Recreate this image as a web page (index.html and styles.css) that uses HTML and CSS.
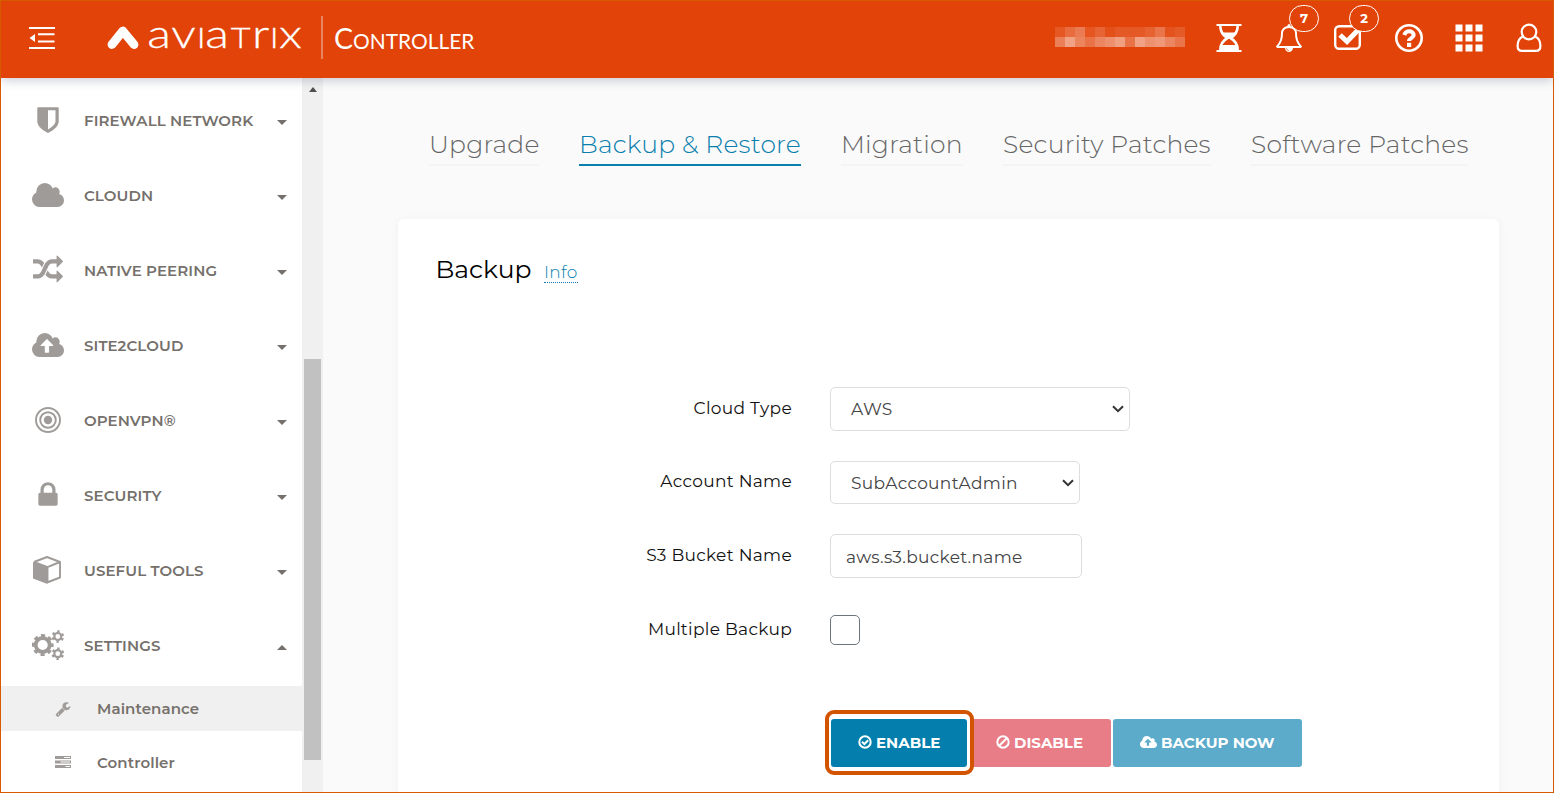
FILE: index.html
```html
<!DOCTYPE html>
<html lang="en">
<head>
<meta charset="utf-8">
<title>Aviatrix Controller</title>
<link rel="stylesheet" href="styles.css">
</head>
<body>
<div class="app">
  <header class="header">
    <svg class="menu-icon" width="26" height="24" viewBox="0 0 26 24" fill="#fff"><path d="M0 1h26v2H0zM0 21h26v2H0zM9 7.300h16.500v2H9zM9 14.500h16.500v2H9zM6 8v8L0.500 12z"/></svg>
    <svg class="logo" width="196" height="30" viewBox="0 0 196 30">
      <path d="M5 21.500L15.800 8L27 21.500" fill="none" stroke="#fff" stroke-width="8.800" stroke-linecap="round" stroke-linejoin="round"/>
      <path d="M11.500 26.500L15.800 16L20.500 26.500z" fill="#e24308"/>
      <g class="logo-text" transform="scale(1.22 1)">
        <text y="25"><tspan x="33">a</tspan><tspan x="52.700">v</tspan><tspan class="cap" x="73.600">i</tspan><tspan x="80.500">a</tspan><tspan class="cap" x="101.500">t</tspan><tspan x="118.800">r</tspan><tspan class="cap" x="133.500">i</tspan><tspan x="141">x</tspan></text>
      </g>
    </svg>
    <span class="divider"></span>
    <span class="product">C<span class="product-small">ONTROLLER</span></span>
    <svg class="redacted" width="130" height="20" viewBox="0 0 13 2" shape-rendering="crispEdges" fill="#fff">
      <g><rect width="1" height="1" opacity=".11"/><rect x="1" width="1" height="1" opacity=".22"/><rect x="2" width="1" height="1" opacity=".3"/><rect x="3" width="1" height="1" opacity=".1"/><rect x="4" width="1" height="1" opacity=".18"/><rect x="5" width="1" height="1" opacity=".07"/><rect x="6" width="3" height="1" opacity=".12"/><rect x="9" width="1" height="1" opacity=".17"/><rect x="10" width="1" height="1" opacity=".27"/><rect x="11" width="1" height="1" opacity=".09"/><rect x="12" width="1" height="1" opacity=".13"/></g>
      <g><rect y="1" width="1" height="1" opacity=".32"/><rect x="1" y="1" width="1" height="1" opacity=".5"/><rect x="2" y="1" width="1" height="1" opacity=".35"/><rect x="3" y="1" width="1" height="1" opacity=".26"/><rect x="4" y="1" width="1" height="1" opacity=".36"/><rect x="5" y="1" width="1" height="1" opacity=".41"/><rect x="6" y="1" width="1" height="1" opacity=".49"/><rect x="7" y="1" width="1" height="1" opacity=".25"/><rect x="8" y="1" width="1" height="1" opacity=".5"/><rect x="9" y="1" width="1" height="1" opacity=".42"/><rect x="10" y="1" width="1" height="1" opacity=".45"/><rect x="11" y="1" width="1" height="1" opacity=".36"/><rect x="12" y="1" width="1" height="1" opacity=".27"/></g>
    </svg>
    <div class="actions">
      <span class="action"><svg width="26" height="28" viewBox="0 0 26 28" fill="none" stroke="#fff" stroke-width="2"><path d="M0.500 1h25M0.500 27h25"/><path stroke-width="2.600" d="M4.300 2C4.300 9 8 12 11.500 14C8 16 4.300 19 4.300 26M21.700 2C21.700 9 18 12 14.500 14C18 16 21.700 19 21.700 26"/><path d="M6 8.500h14C19 11 17 13 14.500 14h-3C9 13 7 11 6 8.500z" fill="#fff" stroke="none"/><path d="M4.500 26c.3-3 1-4 2-5h13c1 1 1.700 2 2 5z" fill="#fff" stroke="none"/></svg></span>
      <span class="action"><svg width="28" height="28" viewBox="0 0 1792 1792" fill="#fff"><path d="M912 1696q0-16-16-16-59 0-101.500-42.500t-42.500-101.500q0-16-16-16t-16 16q0 73 51.500 124.500t124.500 51.500q16 0 16-16zm-666-288h1300q-266-300-266-832 0-51-24-105t-69-103-121.500-80.500-169.500-31.500-169.500 31.500-121.500 80.500-69 103-24 105q0 532-266 832zm1482 0q0 52-38 90t-90 38h-448q0 106-75 181t-181 75-181-75-75-181h-448q-52 0-90-38t-38-90q50-42 91-88t85-119.500 74.500-158.500 50-206 19.500-260q0-152 117-282.500t307-158.500q-8-19-8-39 0-40 28-68t68-28 68 28 28 68q0 20-8 39 190 28 307 158.500t117 282.500q0 139 19.500 260t50 206 74.500 158.500 85 119.500 91 88z"/></svg><span class="badge">7</span></span>
      <span class="action"><svg class="check" width="30" height="28" viewBox="0 0 30 28" fill="none" stroke="#fff"><rect x="2.200" y="3.200" width="24.600" height="22.600" rx="4" stroke-width="2.400"/><path d="M7 12L14 18.500L27 5" stroke-width="5"/></svg><span class="badge">2</span></span>
      <span class="action"><svg width="28" height="28" viewBox="0 0 28 28" fill="none" stroke="#fff"><circle cx="14" cy="14" r="12.700" stroke-width="2.600"/><path d="M9.200 11C10.500 8 12 7.300 14 7.300c2.500 0 4.700 1.500 4.700 3.800 0 3-4.700 3-4.700 6" stroke-width="4"/><path d="M12 18.800h4.200V23H12z" fill="#fff" stroke="none"/></svg></span>
      <span class="action"><svg width="28" height="28" viewBox="0 0 28 28" fill="#fff"><path d="M.500.500h7v7h-7zM10.500.500h7v7h-7zM20.500.500h7v7h-7zM.500 10.500h7v7h-7zM10.500 10.500h7v7h-7zM20.500 10.500h7v7h-7zM.500 20.500h7v7h-7zM10.500 20.500h7v7h-7zM20.500 20.500h7v7h-7z"/></svg></span>
      <span class="action"><svg width="26" height="30" viewBox="0 0 26 30" fill="none" stroke="#fff" stroke-width="2.200"><circle cx="13" cy="9" r="7.300"/><path d="M7 13.500C3 15 1.600 19 1.600 23c0 3.500 2 4.900 4.400 4.900h14c2.400 0 4.400-1.400 4.400-4.900 0-4-1.400-8-5.400-9.500"/></svg></span>
    </div>
  </header>

  <div class="body">
    <nav class="sidebar">
      <a class="item"><span class="ico"><svg width="30" height="30" viewBox="0 0 1792 1792"><path d="M1344 960V320H896v1137q119-63 213-137 235-184 235-360zm192-768v768q0 86-33.500 170.500t-83 150-118 127.500-126.500 103-121 77.500-89.500 49.500-42.500 20q-12 6-26 6t-26-6q-16-7-42.500-20t-89.500-49.500-121-77.500-126.500-103-118-127.500-83-150T256 960V192q0-26 19-45t45-19h1152q26 0 45 19t19 45z"/></svg></span><span class="name">FIREWALL NETWORK</span><i class="caret"></i></a>
      <a class="item"><span class="ico"><svg width="32" height="24" viewBox="64 128 1920 1408" preserveAspectRatio="none"><path d="M1984 1152q0 159-112.500 271.500t-271.500 112.500h-1088q-185 0-316.500-131.500t-131.500-316.500q0-132 71-241.500t187-163.500q-2-28-2-43 0-212 150-362t362-150q158 0 286.500 88t187.500 230q70-62 166-62 106 0 181 75t75 181q0 75-41 138 129 30 213 134.500t84 239.500z"/></svg></span><span class="name">CLOUDN</span><i class="caret"></i></a>
      <a class="item"><span class="ico"><svg width="30" height="30" viewBox="0 0 1792 1792"><path d="M666 481q-60 92-137 273-22-45-37-72.500t-40.500-63.500-51-56.500-63-35-81.500-14.500h-224q-14 0-23-9t-9-23v-192q0-14 9-23t23-9h224q250 0 410 225zm1126 799q0 14-9 23l-320 320q-9 9-23 9-13 0-22.500-9.500t-9.500-22.500v-192q-32 0-85 .5t-81 1-73-1-71-5-64-10.500-63-18.500-58-28.500-59-40-55-53.500-56-69.500q59-93 136-273 22 45 37 72.500t40.500 63.500 51 56.500 63 35 81.500 14.500h256v-192q0-14 9-23t23-9q12 0 24 10l319 319q9 9 9 23zm0-896q0 14-9 23l-320 320q-9 9-23 9-13 0-22.500-9.500t-9.500-22.500v-192h-256q-48 0-87 15t-69 45-51 61.500-45 77.500q-32 62-78 171-29 66-49.500 111t-54 105-64 100-74 83-90 68.500-106.500 42-128 16.500h-224q-14 0-23-9t-9-23v-192q0-14 9-23t23-9h224q48 0 87-15t69-45 51-61.500 45-77.500q32-62 78-171 29-66 49.500-111t54-105 64-100 74-83 90-68.500 106.500-42 128-16.500h256v-192q0-14 9-23t23-9q12 0 24 10l319 319q9 9 9 23z"/></svg></span><span class="name">NATIVE PEERING</span><i class="caret"></i></a>
      <a class="item"><span class="ico"><svg width="32" height="24" viewBox="64 128 1920 1408" preserveAspectRatio="none"><path d="M1344 864q0-14-9-23l-352-352q-9-9-23-9t-23 9l-351 351q-10 12-10 24 0 14 9 23t23 9h224v352q0 13 9.500 22.500t22.500 9.500h192q13 0 22.500-9.500t9.500-22.500v-352h224q13 0 22.500-9.500t9.500-22.500zm640 288q0 159-112.500 271.500t-271.500 112.500h-1088q-185 0-316.500-131.500t-131.500-316.500q0-132 71-241.500t187-163.500q-2-28-2-43 0-212 150-362t362-150q158 0 286.500 88t187.500 230q70-62 166-62 106 0 181 75t75 181q0 75-41 138 129 30 213 134.500t84 239.500z"/></svg></span><span class="name">SITE2CLOUD</span><i class="caret"></i></a>
      <a class="item"><span class="ico"><svg width="26" height="26" viewBox="0 0 26 26"><circle cx="13" cy="13" r="4.200"/><g fill="none" stroke="#9f9b98" stroke-width="1.900"><circle cx="13" cy="13" r="7.800"/><circle cx="13" cy="13" r="12"/></g></svg></span><span class="name">OPENVPN®</span><i class="caret"></i></a>
      <a class="item"><span class="ico"><svg width="30" height="30" viewBox="0 0 1792 1792"><path d="M640 768h512v-192q0-106-75-181t-181-75-181 75-75 181v192zm832 96v576q0 40-28 68t-68 28h-960q-40 0-68-28t-28-68v-576q0-40 28-68t68-28h32v-192q0-184 132-316t316-132 316 132 132 316v192h32q40 0 68 28t28 68z"/></svg></span><span class="name">SECURITY</span><i class="caret"></i></a>
      <a class="item"><span class="ico"><svg width="30" height="28" viewBox="0 0 30 28"><path d="M0 6L14.500 11.500V28L0 22.500z"/><path d="M1 6L14 1L27 6V21.500L14 26.500M14.500 11.200L27 6M1 6L14.500 11.200V26.500" fill="none" stroke="#9f9b98" stroke-width="1.900" stroke-linejoin="round"/></svg></span><span class="name">USEFUL TOOLS</span><i class="caret"></i></a>
      <a class="item"><span class="ico"><svg width="32" height="30" viewBox="0 0 32 30" fill="none" stroke="#9f9b98"><g stroke-width="3.800"><circle cx="10.700" cy="15" r="7"/><circle cx="10.700" cy="15" r="9" stroke-width="3.800" stroke-dasharray="3.900 3.169" stroke-dashoffset="1.950"/></g><g stroke-width="2.200"><circle cx="25.800" cy="6.500" r="3.500"/><circle cx="25.800" cy="6.500" r="5.200" stroke-dasharray="2.400 3.045" stroke-dashoffset="-1.500"/><circle cx="25.800" cy="23.700" r="3.500"/><circle cx="25.800" cy="23.700" r="5.200" stroke-dasharray="2.400 3.045" stroke-dashoffset="-1.500"/></g></svg></span><span class="name">SETTINGS</span><i class="caret up"></i></a>
      <div class="submenu">
        <a class="sub active"><span class="sub-ico"><svg width="16" height="16" viewBox="0 0 1792 1792"><path d="M448 1472q0-26-19-45t-45-19-45 19-19 45 19 45 45 19 45-19 19-45zm644-420l-682 682q-37 37-90 37-52 0-91-37l-106-108q-38-36-38-90 0-53 38-91l681-681q39 98 114.500 173.500t173.500 114.500zm634-435q0 39-23 106-47 134-164.500 217.500t-258.500 83.500q-185 0-316.500-131.500t-131.500-316.500 131.500-316.500 316.500-131.500q58 0 121.500 16.500t107.500 46.500q16 11 16 28t-16 28l-293 169v224l193 107q5-3 79-48.500t135.500-81 70.500-35.500q15 0 23.500 10t8.500 25z"/></svg></span><span>Maintenance</span></a>
        <a class="sub"><span class="sub-ico"><svg width="16" height="14" viewBox="0 0 16 14"><path d="M0 0h16v3H0zM0 4.500h16v3H0zM0 9h16v3H0z"/><path d="M9 1h6v1H9zM5.500 5.500H15v1H5.500zM10.500 10H15v1h-4.500z" fill="#fff"/></svg></span><span>Controller</span></a>
      </div>
    </nav>
    <div class="scrollbar"><i class="scroll-up"></i><i class="thumb"></i></div>

    <main class="content">
      <div class="tabs">
        <a class="tab t1">Upgrade</a>
        <a class="tab t2 selected">Backup &amp; Restore</a>
        <a class="tab t3">Migration</a>
        <a class="tab t4">Security Patches</a>
        <a class="tab t5">Software Patches</a>
      </div>
      <section class="card">
        <div class="card-head"><h1>Backup</h1><a class="info">Info</a></div>
        <div class="form">
          <label>Cloud Type</label>
          <div class="field select wide"><span>AWS</span><svg width="12" height="8" viewBox="0 0 12 8"><path d="M1 1.200L6 6.200L11 1.200"/></svg></div>
          <label>Account Name</label>
          <div class="field select short"><span>SubAccountAdmin</span><svg width="12" height="8" viewBox="0 0 12 8"><path d="M1 1.200L6 6.200L11 1.200"/></svg></div>
          <label>S3 Bucket Name</label>
          <div class="field text"><span>aws.s3.bucket.name</span></div>
          <label>Multiple Backup</label>
          <span class="checkbox"></span>
        </div>
        <div class="buttons">
          <a class="btn enable"><svg width="14" height="14" viewBox="0 0 14 14" fill="none" stroke="#fff" stroke-width="2"><circle cx="7" cy="7" r="5.700"/><path d="M4 6.800L6.400 9L10.200 5.200"/></svg><span>ENABLE</span></a>
          <a class="btn disable"><svg width="14" height="14" viewBox="0 0 14 14" fill="none" stroke="#fff" stroke-width="2"><circle cx="7" cy="7" r="5.700"/><path d="M3.200 10.800L10.800 3.200"/></svg><span>DISABLE</span></a>
          <a class="btn backup"><svg width="17" height="12" viewBox="64 128 1920 1408" preserveAspectRatio="none" fill="#fff"><path d="M1344 864q0-14-9-23l-352-352q-9-9-23-9t-23 9l-351 351q-10 12-10 24 0 14 9 23t23 9h224v352q0 13 9.500 22.500t22.500 9.500h192q13 0 22.500-9.500t9.500-22.500v-352h224q13 0 22.500-9.500t9.500-22.500zm640 288q0 159-112.500 271.500t-271.500 112.500h-1088q-185 0-316.500-131.500t-131.500-316.500q0-132 71-241.500t187-163.500q-2-28-2-43 0-212 150-362t362-150q158 0 286.500 88t187.500 230q70-62 166-62 106 0 181 75t75 181q0 75-41 138 129 30 213 134.500t84 239.500z"/></svg><span>BACKUP NOW</span></a>
        </div>
      </section>
    </main>
  </div>
</div>
</body>
</html>
```
FILE: styles.css
```css
* { box-sizing: border-box; }
body { margin: 0; font-family: Montserrat, Inter, "Open Sans", sans-serif; overflow: hidden; }
svg { display: block; flex: none; }
span, a, label, h1 { white-space: nowrap; }
.app { width: 1554px; height: 793px; border: 1px solid #d65a00; display: flex; flex-direction: column; overflow: hidden; background: #fafafa; }

.header { height: 77px; flex: none; background: #e24308; display: flex; align-items: center; position: relative; z-index: 2; box-shadow: 0 2px 10px rgba(60, 70, 100, .28); }
.header > * { flex: none; }
.menu-icon { margin: -3px 0 0 28px; }
.logo { margin: -4px 0 0 52px; overflow: visible; }
.logo-text { font-family: Lato, sans-serif; font-weight: 300; font-size: 40px; fill: #fff; stroke: #fff; stroke-width: .3px; }
.logo-text .cap { text-transform: uppercase; font-size: 28px; }
.divider { width: 2px; height: 43px; background: #eb8560; margin: -4px 0 0 18px; }
.product { width: 140px; margin: 0 0 0 11px; font-family: Lato, sans-serif; font-size: 28.5px; line-height: 40px; color: #fff; }
.product-small { font-size: 20.9px; }
.redacted { margin: -5px 0 0 581px; }
.actions { display: flex; margin: -4px 0 0 14px; }
.action { width: 60px; height: 30px; display: flex; align-items: center; justify-content: center; position: relative; }
.check { margin: -2px 2px 0 0; }
.badge { position: absolute; left: 30px; top: -18px; width: 30px; height: 27px; border: 1px solid #fff; border-radius: 14px; background: #e24308; color: #fff; font-size: 13px; font-weight: 700; line-height: 25px; text-align: center; }

.body { flex: 1; display: flex; min-height: 0; }
.sidebar { width: 301px; flex: none; background: #fff; padding-top: 5px; color: #75706b; font-weight: 600; font-size: 15px; letter-spacing: .1px; overflow: hidden; }
.sidebar svg { fill: #9f9b98; }
.item { height: 75px; display: flex; align-items: center; padding: 0 15px 0 31px; }
.ico { width: 32px; display: flex; justify-content: center; margin: -2px 20px 0 0; }
.item svg[fill="none"] { fill: none; }
.name { flex: 1; }
.caret { border: 5px solid transparent; border-top-color: #75706b; border-bottom: 0; margin-top: 4px; }
.caret.up { border-top: 0; border-bottom: 5px solid #75706b; }
.submenu { padding-top: 3px; display: flex; flex-direction: column; gap: 9px; }
.sub { height: 45px; display: flex; align-items: center; padding-left: 54px; }
.sub.active { background: #f0f0f0; }
.sub-ico { width: 42px; }
.scrollbar { width: 21px; flex: none; background: #f0f0f0; display: flex; flex-direction: column; align-items: center; padding-top: 9px; }
.scroll-up { border: 4.500px solid transparent; border-bottom: 5px solid #505050; border-top: 0; }
.thumb { width: 17px; height: 401px; margin-top: 267px; background: #c1c1c1; flex: none; }

.content { flex: 1; padding: 48px 54px 0 75px; min-width: 0; }
.tabs { display: flex; gap: 40px; padding-left: 31px; height: 93px; align-items: flex-start; }
.tab { font-size: 25px; font-weight: 300; letter-spacing: .22px; line-height: 36px; height: 40px; color: #666; border-bottom: 2px solid #f4f4f4; white-space: nowrap; flex: none; }
.tab.selected { color: #0a7fad; border-color: #0a7fad; }
.t1 { width: 110px; } .t2 { width: 222px; } .t3 { width: 122px; } .t4 { width: 208px; } .t5 { width: 217px; }
.card { height: 620px; background: #fff; border-radius: 6px; box-shadow: 0 2px 10px rgba(0, 0, 0, .05); padding: 32px 0 0 38px; }
.card-head { display: flex; align-items: baseline; height: 136px; }
h1 { margin: 0 12px 0 0; font-size: 25px; font-weight: 400; line-height: 36px; width: 96px; color: #000; text-indent: -.5px; }
.info { width: 34px; font-size: 17px; line-height: 20px; font-weight: 300; letter-spacing: .3px; color: #0a7fad; border-bottom: 1px dotted #0a7fad; }
.form { display: grid; grid-template-columns: 356px auto; column-gap: 38px; row-gap: 30px; grid-template-rows: 44px 43px 44px 44px; align-items: center; justify-content: start; }
.form label { text-align: right; font-size: 17px; letter-spacing: .3px; line-height: 24px; color: #111; font-weight: 400; margin-top: -2.5px; }
.field { height: 100%; border: 1px solid #ddd; border-radius: 5px; display: flex; align-items: center; justify-content: space-between; font-size: 17px; letter-spacing: .32px; font-weight: 400; color: #444; }
.select { padding: 0 5px 0 20px; }
.select svg path { fill: none; stroke: #333; stroke-width: 2; }
.wide { width: 300px; }
.short { width: 250px; }
.text { width: 252px; padding: 2px 0 0 15px; }
.checkbox { width: 30px; height: 30px; border: 1px solid #6c757d; border-radius: 5px; }
.buttons { display: flex; gap: 2px; margin: 67px 0 0 395px; }
.btn { height: 48px; border-radius: 3px; display: flex; align-items: center; gap: 4px; color: #fff; font-size: 15px; font-weight: 700; padding: 0 0 2px 27px; }
.enable { width: 136px; background: #047fad; position: relative; box-shadow: 0 0 0 4px #fff; z-index: 1; }
.enable::after { content: ""; position: absolute; inset: -9px -7px -8px -6px; border: 4px solid #d35400; border-radius: 9px; }
.disable { width: 142px; background: #e87c87; }
.backup { width: 189px; background: #5cabca; }
```
